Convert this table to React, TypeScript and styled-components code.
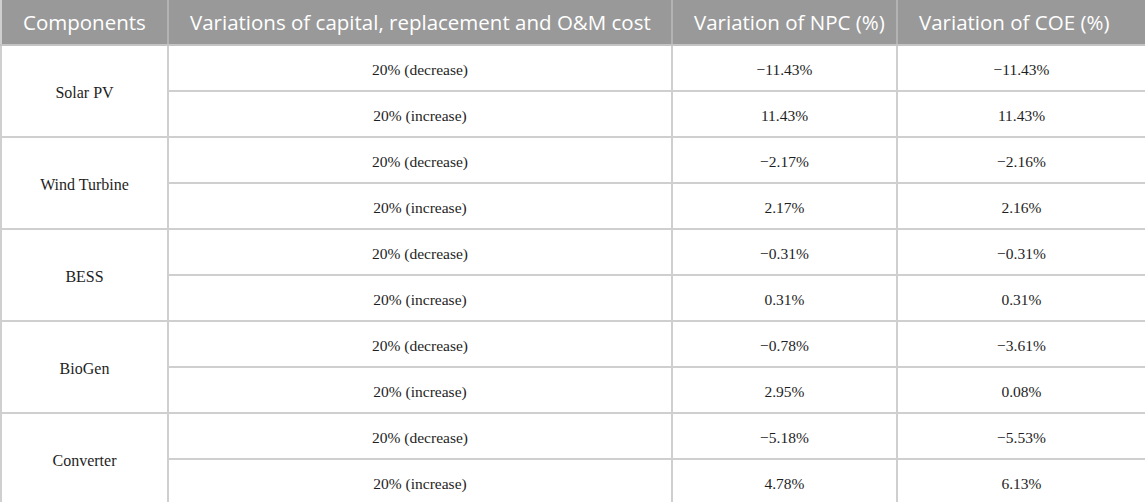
import styled, { createGlobalStyle } from 'styled-components'

const Global = createGlobalStyle`
  html, body {
    margin: 0;
    padding: 0;
    background: #fff;
  }
  * {
    box-sizing: border-box;
  }
`

const Table = styled.table`
  width: 1145px;
  border-collapse: collapse;
  table-layout: fixed;
  border-left: 2px solid #cfcfcf;
  border-right: 2px solid #cfcfcf;
`

const HeadCell = styled.th`
  height: 45px;
  padding: 0 0 0 21px;
  background: #999999;
  color: #fff;
  font-family: 'Open Sans', sans-serif;
  font-weight: 400;
  font-size: 20.5px;
  text-align: left;
  white-space: nowrap;
  overflow: hidden;
  border-left: 2px solid #b3b3b3;
  border-bottom: 2px solid #c4c4c4;
  &:first-child {
    border-left: none;
  }
`

const Cell = styled.td`
  height: 46px;
  padding: 3px 6px 0;
  font-family: 'Liberation Serif', 'Times New Roman', serif;
  font-size: 15.5px;
  color: #1e1e1e;
  text-align: center;
  border: 2px solid #cfcfcf;
`

const NameCell = styled(Cell)`
  font-size: 16px;
`

type Row = [string, string, string]

const groups: { name: string; rows: Row[] }[] = [
  {
    name: 'Solar PV',
    rows: [
      ['20% (decrease)', '−11.43%', '−11.43%'],
      ['20% (increase)', '11.43%', '11.43%'],
    ],
  },
  {
    name: 'Wind Turbine',
    rows: [
      ['20% (decrease)', '−2.17%', '−2.16%'],
      ['20% (increase)', '2.17%', '2.16%'],
    ],
  },
  {
    name: 'BESS',
    rows: [
      ['20% (decrease)', '−0.31%', '−0.31%'],
      ['20% (increase)', '0.31%', '0.31%'],
    ],
  },
  {
    name: 'BioGen',
    rows: [
      ['20% (decrease)', '−0.78%', '−3.61%'],
      ['20% (increase)', '2.95%', '0.08%'],
    ],
  },
  {
    name: 'Converter',
    rows: [
      ['20% (decrease)', '−5.18%', '−5.53%'],
      ['20% (increase)', '4.78%', '6.13%'],
    ],
  },
]

export default function App() {
  return (
    <>
      <Global />
      <Table>
        <colgroup>
          <col style={{ width: 167 }} />
          <col style={{ width: 504 }} />
          <col style={{ width: 225 }} />
          <col style={{ width: 249 }} />
        </colgroup>
        <thead>
          <tr>
            <HeadCell>Components</HeadCell>
            <HeadCell>Variations of capital, replacement and O&amp;M cost</HeadCell>
            <HeadCell>Variation of NPC (%)</HeadCell>
            <HeadCell>Variation of COE (%)</HeadCell>
          </tr>
        </thead>
        <tbody>
          {groups.map((g) =>
            g.rows.map((r, i) => (
              <tr key={g.name + i}>
                {i === 0 && <NameCell rowSpan={2}>{g.name}</NameCell>}
                <Cell>{r[0]}</Cell>
                <Cell>{r[1]}</Cell>
                <Cell>{r[2]}</Cell>
              </tr>
            ))
          )}
        </tbody>
      </Table>
    </>
  )
}
